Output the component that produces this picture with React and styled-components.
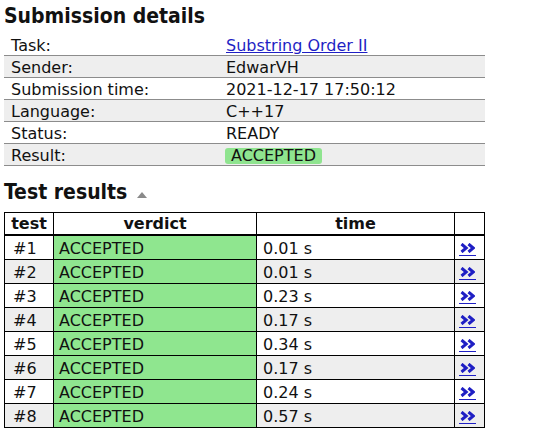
import styled, { createGlobalStyle } from "styled-components";

const GlobalStyle = createGlobalStyle`
  body {
    margin: 0;
    background: #fff;
    color: #111;
    font-family: "DejaVu Sans", Verdana, sans-serif;
    font-size: 16px;
  }
`;

const Page = styled.div`
  padding: 0 4px;
  width: 481px;
`;

const Heading = styled.h2`
  margin: 0;
  font-family: "DejaVu Sans Condensed", "DejaVu Sans", sans-serif;
  font-weight: bold;
  font-size: 21px;
  line-height: 24px;
  padding: ${(p) => (p.$sub ? "14px 0 8px" : "4px 0 6px")};
  color: #111;
  display: flex;
  align-items: center;
  gap: 10px;
`;

const SortArrow = styled.span`
  display: inline-block;
  width: 0;
  height: 0;
  margin-top: 5px;
  border-left: 5.5px solid transparent;
  border-right: 5.5px solid transparent;
  border-bottom: 6px solid #8a8a8a;
`;

const Summary = styled.table`
  width: 481px;
  border-collapse: separate;
  border-spacing: 0;
`;

const SummaryRow = styled.tr`
  background: ${(p) => (p.$even ? "#eeeeee" : "#fff")};
`;

const SummaryCell = styled.td`
  padding: 2px 0 0 ${(p) => (p.$first ? "7px" : "0")};
  width: ${(p) => (p.$first ? "222px" : "auto")};
  box-sizing: border-box;
  line-height: 19px;
  border-bottom: 1px solid #8c8c8c;
  white-space: nowrap;
`;

const Link = styled.a`
  color: #1f1fc4;
  text-decoration: underline;
  cursor: pointer;
`;

const Badge = styled.span`
  display: inline-block;
  margin-left: -1px;
  padding: 0 6px;
  line-height: 16px;
  border-radius: 3px;
  background: #8fe48f;
`;

const Results = styled.table`
  width: 481px;
  table-layout: fixed;
  border-collapse: separate;
  border-spacing: 0;
`;

const HeadCell = styled.th`
  box-sizing: border-box;
  width: ${(p) => p.$w}px;
  padding: 1px 0 0;
  line-height: 20px;
  font-weight: bold;
  text-align: center;
  border-top: 1px solid #000;
  border-right: 1px solid #000;
  border-bottom: 2px solid #000;
  border-left: ${(p) => (p.$first ? "1px solid #000" : "none")};
`;

const Cell = styled.td`
  box-sizing: border-box;
  padding: 2px 0 0 ${(p) => p.$pad ?? 5}px;
  line-height: 21px;
  text-align: ${(p) => (p.$center ? "center" : "left")};
  background: ${(p) => (p.$green ? "#8fe68f" : p.$even ? "#eeeeee" : "#fff")};
  border-right: 1px solid #000;
  border-bottom: 1px solid #000;
  border-left: ${(p) => (p.$first ? "1px solid #000" : "none")};
  white-space: nowrap;
`;

const More = styled.a`
  display: inline-block;
  vertical-align: top;
  margin: 5px 0 0 -4px;
  padding: 0 1px 2px;
  border-bottom: 1px solid #1f1fc4;
  line-height: 0;
  cursor: pointer;

  svg {
    display: block;
  }
`;

const Chevrons = () => (
  <svg width="15" height="10" viewBox="0 0 15 10">
    <path
      d="M1.5 1 L6.2 5 L1.5 9 M8.5 1 L13.2 5 L8.5 9"
      fill="none"
      stroke="#1f1fc4"
      strokeWidth="3"
      strokeLinejoin="miter"
    />
  </svg>
);

const details = [
  ["Task:", <Link key="t">Substring Order II</Link>],
  ["Sender:", "EdwarVH"],
  ["Submission time:", "2021-12-17 17:50:12"],
  ["Language:", "C++17"],
  ["Status:", "READY"],
  ["Result:", <Badge key="b">ACCEPTED</Badge>],
];

const tests = ["0.01", "0.01", "0.23", "0.17", "0.34", "0.17", "0.24", "0.57"];

export default function App() {
  return (
    <>
      <GlobalStyle />
      <Page>
        <Heading>Submission details</Heading>
        <Summary>
          <tbody>
            {details.map(([label, value], i) => (
              <SummaryRow key={label} $even={i % 2 === 1}>
                <SummaryCell $first>{label}</SummaryCell>
                <SummaryCell>{value}</SummaryCell>
              </SummaryRow>
            ))}
          </tbody>
        </Summary>

        <Heading $sub>
          Test results <SortArrow />
        </Heading>
        <Results>
          <thead>
            <tr>
              <HeadCell $first $w={50}>test</HeadCell>
              <HeadCell $w={203}>verdict</HeadCell>
              <HeadCell $w={198}>time</HeadCell>
              <HeadCell $w={30}></HeadCell>
            </tr>
          </thead>
          <tbody>
            {tests.map((t, i) => {
              const even = i % 2 === 1;
              return (
                <tr key={i}>
                  <Cell $first $even={even} $pad={8}>#{i + 1}</Cell>
                  <Cell $green>ACCEPTED</Cell>
                  <Cell $even={even} $pad={6}>{t} s</Cell>
                  <Cell $even={even} $center $pad={0}>
                    <More>
                      <Chevrons />
                    </More>
                  </Cell>
                </tr>
              );
            })}
          </tbody>
        </Results>
      </Page>
    </>
  );
}
